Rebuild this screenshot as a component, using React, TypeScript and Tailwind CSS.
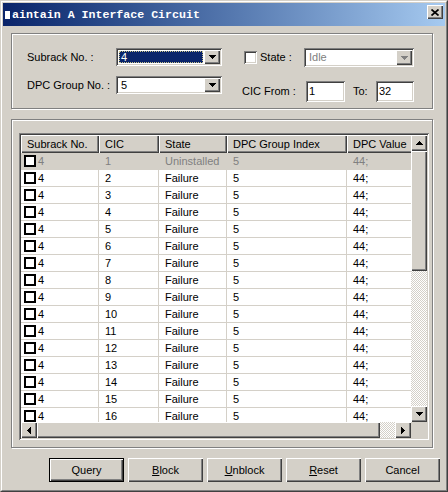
import React from "react";

const RAISED =
  "shadow-[inset_1px_1px_0_#ffffff,inset_-1px_-1px_0_#404040,inset_-2px_-2px_0_#808080]";
const SUNKEN =
  "shadow-[inset_1px_1px_0_#808080,inset_-1px_-1px_0_#ffffff,inset_2px_2px_0_#404040,inset_-2px_-2px_0_#d4d0c8]";
const ETCHED =
  "border border-[#808080] shadow-[inset_1px_1px_0_#ffffff,1px_1px_0_#ffffff]";
const CHECKER =
  "[background-image:repeating-conic-gradient(#ffffff_0_25%,#d4d0c8_0_50%)] [background-size:2px_2px]";

type Dir = "up" | "down" | "left" | "right";

function Tri({ dir, color = "#000" }: { dir: Dir; color?: string }) {
  const vertical = dir === "up" || dir === "down";
  const w = vertical ? 7 : 4;
  const h = vertical ? 4 : 7;
  const pts: Record<Dir, string> = {
    down: "0,0 7,0 3.5,4",
    up: "0,4 7,4 3.5,0",
    left: "4,0 4,7 0,3.5",
    right: "0,0 0,7 4,3.5",
  };
  return (
    <svg width={w} height={h} viewBox={`0 0 ${w} ${h}`} shapeRendering="crispEdges">
      <polygon points={pts[dir]} fill={color} />
    </svg>
  );
}

function Combo({
  value,
  size,
  selected,
  disabled,
}: {
  value: string;
  size: string;
  selected?: boolean;
  disabled?: boolean;
}) {
  return (
    <div className={`${size} ${SUNKEN} bg-white p-[2px] flex`}>
      <div className="flex-1 p-px flex">
        {selected ? (
          <div className="flex-1 bg-[#0a246a] text-white border border-dotted border-[#c9c28a] flex items-center pl-px">
            {value}
          </div>
        ) : (
          <div className={`flex-1 flex items-center pl-[2px] ${disabled ? "text-[#808080]" : ""}`}>
            {value}
          </div>
        )}
      </div>
      <div className={`w-[16px] h-full bg-[#d4d0c8] ${RAISED} flex items-center justify-center`}>
        <Tri dir="down" color={disabled ? "#808080" : "#000"} />
      </div>
    </div>
  );
}

function Edit({ value, size }: { value: string; size: string }) {
  return (
    <div className={`${size} h-[21px] ${SUNKEN} bg-white flex items-center pl-[3px]`}>{value}</div>
  );
}

function SBtn({ dir, cls }: { dir: Dir; cls: string }) {
  return (
    <div className={`${cls} shrink-0 bg-[#d4d0c8] ${RAISED} flex items-center justify-center`}>
      <Tri dir={dir} />
    </div>
  );
}

const COLW = ["w-[78px]", "w-[60px]", "w-[68px]", "w-[120px]", "w-[90px]"];
const HEAD = ["Subrack No.", "CIC", "State", "DPC Group Index", "DPC Value"];

const ROWS = Array.from({ length: 16 }, (_, i) => ({
  sub: "4",
  cic: String(i + 1),
  state: i === 0 ? "Uninstalled" : "Failure",
  idx: "5",
  val: "44;",
}));

function Button({
  children,
  def,
}: {
  children: React.ReactNode;
  def?: boolean;
}) {
  if (def) {
    return (
      <div className="w-[75px] h-[24px] border border-black">
        <div className={`w-full h-full ${RAISED} flex items-center justify-center`}>{children}</div>
      </div>
    );
  }
  return (
    <div className={`w-[75px] h-[24px] ${RAISED} flex items-center justify-center`}>{children}</div>
  );
}

export default function App() {
  return (
    <div className="w-[448px] h-[492px] overflow-hidden bg-[#d4d0c8] border border-t-[#d4d0c8] border-l-[#d4d0c8] border-r-[#404040] border-b-[#404040] [font-family:'Liberation_Sans',Arial,sans-serif] text-[11px] leading-[13px] text-black">
      <div className="h-full border border-t-white border-l-white border-r-[#808080] border-b-[#808080] p-px flex flex-col">
        {/* Title bar */}
        <div className="h-[23px] shrink-0 flex items-start bg-linear-to-r from-[#0a246a] to-[#a6caf0]">
          <div className="flex items-center pl-[2px] pt-[5px] [font-family:'Liberation_Mono',monospace] font-bold text-[11.6px] leading-[14px] text-white whitespace-pre">
            <span className="inline-block w-[5px] h-[8px] bg-white mr-[2px]" />
            <span>aintain A Interface Circuit</span>
          </div>
          <div className={`ml-auto mt-[2px] mr-[2px] w-[16px] h-[14px] bg-[#d4d0c8] ${RAISED} flex items-center justify-center`}>
            <svg width="8" height="7" viewBox="0 0 8 7">
              <path d="M0.5 0.5 L7.5 6.5 M7.5 0.5 L0.5 6.5" stroke="#000" strokeWidth="1.7" />
            </svg>
          </div>
        </div>

        {/* Group 1 */}
        <div className={`mt-[7px] ml-[8px] w-[422px] h-[76px] shrink-0 ${ETCHED}`}>
          <div className="flex pl-[15px] pt-[14px]">
            <div className="flex flex-col gap-[10px]">
              <div className="flex items-center">
                <span className="w-[89px]">Subrack No. :</span>
                <Combo value="4" size="w-[106px] h-[18px]" selected />
              </div>
              <div className="flex items-center">
                <span className="w-[89px]">DPC Group No. :</span>
                <Combo value="5" size="w-[106px] h-[18px]" />
              </div>
            </div>
            <div className="ml-[20px] flex flex-col gap-[14px]">
              <div className="flex items-center h-[19px]">
                <div className={`ml-[2px] w-[13px] h-[13px] bg-white ${SUNKEN}`} />
                <span className="ml-[3px] w-[44px]">State :</span>
                <Combo value="Idle" size="w-[110px] h-[19px]" disabled />
              </div>
              <div className="flex items-center">
                <span className="w-[64px]">CIC From :</span>
                <Edit value="1" size="w-[39px]" />
                <span className="ml-[8px] w-[23px]">To:</span>
                <Edit value="32" size="w-[38px]" />
              </div>
            </div>
          </div>
        </div>

        {/* Group 2 */}
        <div className={`mt-[10px] ml-[8px] w-[422px] h-[329px] shrink-0 ${ETCHED}`}>
          <div className={`mt-[13px] ml-[7px] w-[410px] h-[307px] ${SUNKEN} p-[2px] flex flex-col`}>
            <div className="flex h-[287px]">
              <div className="w-[390px] overflow-hidden bg-white">
                <div className="flex h-[18px] w-max bg-[#d4d0c8]">
                  {HEAD.map((h, i) => (
                    <div key={h} className={`${COLW[i]} shrink-0 h-full ${RAISED} flex items-center pl-[6px] whitespace-nowrap`}>
                      {h}
                    </div>
                  ))}
                </div>
                {ROWS.map((r, i) => {
                  const dis = i === 0;
                  const rowCls = dis ? "bg-[#d4d0c8] text-[#808080]" : "bg-white";
                  const cells = [r.cic, r.state, r.idx, r.val];
                  return (
                    <div key={i} className={`flex h-[17px] w-max border-b border-[#d4d0c8] ${rowCls}`}>
                      <div className={`${COLW[0]} shrink-0 h-full border-r border-[#d4d0c8] flex items-center pl-[3px]`}>
                        <div className="w-[12px] h-[12px] border-2 border-black bg-white" />
                        <span className="ml-[2px]">{r.sub}</span>
                      </div>
                      {cells.map((c, j) => (
                        <div key={j} className={`${COLW[j + 1]} shrink-0 h-full border-r border-[#d4d0c8] flex items-center pl-[6px] whitespace-nowrap`}>
                          {c}
                        </div>
                      ))}
                    </div>
                  );
                })}
              </div>
              {/* vertical scrollbar */}
              <div className="w-[16px] h-full flex flex-col">
                <SBtn dir="up" cls="h-[16px] w-[16px]" />
                <div className={`h-[120px] shrink-0 bg-[#d4d0c8] ${RAISED}`} />
                <div className={`flex-1 ${CHECKER}`} />
                <SBtn dir="down" cls="h-[16px] w-[16px]" />
              </div>
            </div>
            <div className="flex h-[16px]">
              <div className="w-[390px] flex">
                <SBtn dir="left" cls="w-[16px] h-full" />
                <div className={`w-[343px] shrink-0 h-full bg-[#d4d0c8] ${RAISED}`} />
                <div className={`flex-1 h-full ${CHECKER}`} />
                <SBtn dir="right" cls="w-[16px] h-full" />
              </div>
              <div className="w-[16px] h-full bg-[#d4d0c8]" />
            </div>
          </div>
        </div>

        {/* Buttons */}
        <div className="mt-[10px] ml-[46px] flex gap-[4px]">
          <Button def>Query</Button>
          <Button>
            <span><span className="underline">B</span>lock</span>
          </Button>
          <Button>
            <span><span className="underline">U</span>nblock</span>
          </Button>
          <Button>
            <span><span className="underline">R</span>eset</span>
          </Button>
          <Button>Cancel</Button>
        </div>
      </div>
    </div>
  );
}
